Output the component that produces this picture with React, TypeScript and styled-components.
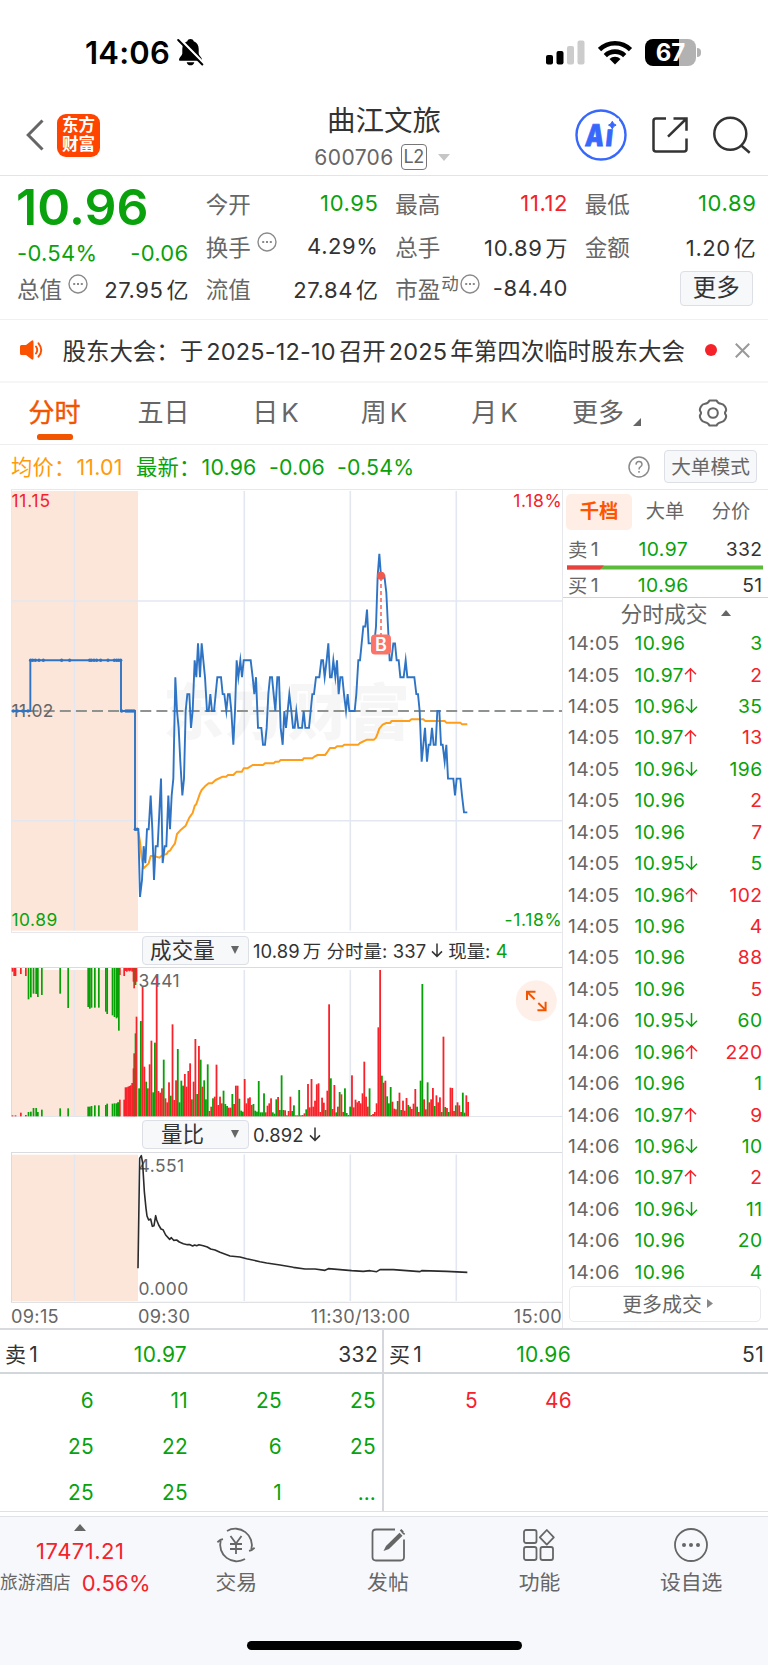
import React from 'react';
import styled, { createGlobalStyle, css } from 'styled-components';

const RED = '#f4222a';
const GREEN = '#09a20c';
const INK = '#333333';
const GREY = '#666666';
const LINE = '#e6e8ec';
const ORANGE = '#f25500';

type Tone = 'up' | 'down' | 'ink' | 'grey';
const tones: Record<Tone, string> = { up: RED, down: GREEN, ink: INK, grey: GREY };

const GlobalStyle = createGlobalStyle`
  * { box-sizing: border-box; }
  body {
    margin: 0;
    background: #fff;
    color: ${INK};
    font-family: Inter, "Noto Sans CJK SC", sans-serif;
    font-size: 22px;
    -webkit-font-smoothing: antialiased;
  }
`;

const Screen = styled.main`
  width: 768px;
  height: 1665px;
  overflow: hidden;
  display: flex;
  flex-direction: column;
  background: #fff;
  white-space: nowrap;
`;

/* ---------- status bar ---------- */

const StatusBar = styled.header`
  height: 104px;
  flex: none;
  display: flex;
  align-items: center;
  justify-content: space-between;
  padding: 0 67px 0 85px;
`;

const Clock = styled.div`
  display: flex;
  align-items: center;
  gap: 7px;
  color: #000;
  font-size: 31px;
  font-weight: 600;
  letter-spacing: 0.2px;
`;

const StatusIcons = styled.div`
  display: flex;
  align-items: center;
  gap: 12px;
  margin-left: -1px;
`;

const Battery = styled.div`
  display: flex;
  align-items: center;
  gap: 1px;
`;

const BatteryBody = styled.div`
  width: 51px;
  height: 27px;
  border-radius: 8px;
  background: linear-gradient(90deg, #000 67%, #b2b2b2 67%);
  color: #fff;
  font-size: 24px;
  font-weight: 700;
  line-height: 27px;
  text-align: center;
  letter-spacing: -0.1px;
`;

const BatteryTip = styled.div`
  width: 4px;
  height: 9px;
  border-radius: 0 4px 4px 0;
  background: #b2b2b2;
`;

/* ---------- title bar ---------- */

const TitleBar = styled.div`
  height: 72px;
  flex: none;
  display: grid;
  grid-template-columns: 1fr auto 1fr;
  border-bottom: 1px solid #e2e4e6;
`;

const TitleSide = styled.div<{ $end?: boolean }>`
  height: 62px;
  display: flex;
  align-items: center;
  justify-content: ${(p) => (p.$end ? 'flex-end' : 'flex-start')};
  gap: ${(p) => (p.$end ? '24px' : '13px')};
  padding: ${(p) => (p.$end ? '0 17px 0 0' : '0 0 0 26px')};
`;

const Brand = styled.div`
  width: 43px;
  height: 43px;
  border-radius: 9px;
  background: #ff4400;
  color: #fff;
  font-size: 16.5px;
  font-weight: 700;
  line-height: 18.5px;
  padding: 2.5px 0;
  text-align: center;
`;

const TitleCenter = styled.div`
  display: flex;
  flex-direction: column;
  align-items: center;
`;

const StockName = styled.h1`
  margin: -1px 0 4px;
  font-size: 28.5px;
  font-weight: 400;
  line-height: 36px;
`;

const StockCode = styled.div`
  display: flex;
  align-items: center;
  height: 28px;
  margin-right: 4px;
  color: ${GREY};
  font-size: 21px;
  letter-spacing: 0.4px;
`;

const LevelTag = styled.span`
  width: 26px;
  height: 26px;
  margin: 0 11px 0 7px;
  border: 1.5px solid #777;
  border-radius: 4px;
  font-size: 18px;
  line-height: 23px;
  text-align: center;
  letter-spacing: -0.3px;
`;

const Caret = styled.span<{ $w: number; $h: number; $color: string; $up?: boolean }>`
  width: 0;
  height: 0;
  border: solid transparent;
  border-width: ${(p) => (p.$up ? `0 ${p.$w / 2}px ${p.$h}px` : `${p.$h}px ${p.$w / 2}px 0`)};
  ${(p) => (p.$up ? css`border-bottom-color: ${p.$color};` : css`border-top-color: ${p.$color};`)}
`;

/* ---------- quote ---------- */

const Quote = styled.section`
  height: 144px;
  flex: none;
  display: grid;
  grid-template-columns: 171.5px 172.3px 172.3px 171.2px;
  grid-template-rows: 42.5px 42.5px 42px;
  column-gap: 17.2px;
  padding: 6px 0 0 17px;
  border-bottom: 1px solid #eef0f1;
`;

const Headline = styled.div`
  grid-row: span 2;
  color: ${GREEN};
`;

const LastPrice = styled.div`
  margin-left: -1px;
  font-size: 50px;
  font-weight: 600;
  line-height: 50px;
  letter-spacing: 0.1px;
`;

const Changes = styled.div`
  display: flex;
  justify-content: space-between;
  font-size: 22px;
  letter-spacing: 0.3px;
  line-height: 28px;
  margin-top: 7px;
`;

const Stat = styled.div`
  display: flex;
  align-items: center;
  justify-content: space-between;
`;

const StatLabel = styled.span`
  display: flex;
  align-items: center;
  color: ${GREY};
  font-size: 22.5px;

  svg { margin: -8px 0 0 6px; }
`;

const Sup = styled.span`
  font-size: 17.5px;
  margin: -12px -5px 0 1px;
`;

const StatValue = styled.span<{ $tone?: Tone }>`
  color: ${(p) => tones[p.$tone ?? 'ink']};
  font-size: 22px;
  letter-spacing: 0.6px;
  margin-right: -0.6px;
`;

const Unit = styled.span`
  margin-left: 3px;
`;

const MoreButton = styled.button`
  justify-self: end;
  align-self: center;
  width: 73px;
  height: 35px;
  margin-right: 3px;
  padding: 0;
  border: 1.5px solid #dcdfe5;
  border-radius: 4px;
  background: #f7f8fa;
  color: ${INK};
  font: inherit;
  font-size: 23.5px;
  line-height: 30px;
`;

/* ---------- announcement ---------- */

const Notice = styled.section`
  height: 63px;
  flex: none;
  display: flex;
  align-items: center;
  padding: 0 18px 1px 20px;
  border-bottom: 2px solid #f6f6f7;
`;

const NoticeText = styled.span`
  margin-left: 18.5px;
  width: 628px;
  font-size: 23.5px;
  letter-spacing: -0.05px;

  i { font-style: normal; margin: 0 3px; letter-spacing: 0.2px; }
`;

const Dot = styled.span`
  width: 12px;
  height: 12px;
  margin: 0 18px 0 auto;
  border-radius: 50%;
  background: #f6222a;
`;

/* ---------- period tabs ---------- */

const Tabs = styled.nav`
  height: 62px;
  flex: none;
  display: flex;
  align-items: stretch;
  border-bottom: 1px solid #eceeef;
`;

const Tab = styled.div<{ $w: number; $active?: boolean }>`
  width: ${(p) => p.$w}px;
  display: flex;
  flex-direction: column;
  align-items: center;
  padding-top: 11px;
  color: ${(p) => (p.$active ? ORANGE : GREY)};
  font-size: 26px;
  -webkit-text-stroke: ${(p) => (p.$active ? '0.4px' : '0')} currentColor;
  line-height: 38px;

  &::after {
    content: '';
    width: 36px;
    height: 6px;
    margin-top: 2px;
    border-radius: 2.5px;
    background: ${(p) => (p.$active ? ORANGE : 'transparent')};
  }
`;

const TabText = styled.span`
  display: flex;
  align-items: center;
  gap: 3px;
`;

const Legend = styled.div`
  height: 44px;
  flex: none;
  display: flex;
  align-items: center;
  padding: 0 11px 1px;
  font-size: 21.3px;
`;

const LegendItem = styled.span<{ $color: string; $gap: number }>`
  display: flex;
  align-items: baseline;
  margin-right: ${(p) => p.$gap}px;
  color: ${(p) => p.$color};
  line-height: 32px;
  letter-spacing: 0.2px;
`;

const LegendLabel = styled.span`
  width: 65.5px;
`;

const ModeButton = styled.button`
  width: 93px;
  height: 33px;
  margin-left: 14px;
  padding: 0;
  border: 1.5px solid #dcdfe5;
  border-radius: 4px;
  background: #f7f8fa;
  color: ${GREY};
  font: inherit;
  font-size: 19.7px;
  line-height: 28px;
`;

const Spacer = styled.span`
  flex: 1;
`;

/* ---------- charts and side panel ---------- */

const Market = styled.section`
  height: 841px;
  flex: none;
  display: flex;
  border-bottom: 2px solid #d8dade;
`;

const ChartColumn = styled.div`
  width: 563px;
  border-right: 1px solid ${LINE};
  display: flex;
  flex-direction: column;

  svg { display: block; flex: none; }
  svg text { font-family: Inter, "Noto Sans CJK SC", sans-serif; }
`;

const ChartToolbar = styled.div<{ $h: number }>`
  height: ${(p) => p.$h}px;
  flex: none;
  display: flex;
  align-items: center;
  padding-left: 142px;
  font-size: 18.4px;
  letter-spacing: 0.1px;
  gap: 5px;
`;

const Picker = styled.div`
  width: 107px;
  height: 29px;
  display: flex;
  align-items: center;
  justify-content: space-between;
  margin-right: -1px;
  padding: 0 9px 1px 6px;
  border: 1.5px solid #dcdfe5;
  border-radius: 4px;
  background: #f7f8fa;
  font-size: 21.5px;
  line-height: 26px;

  b {
    flex: 1;
    font-weight: 400;
    padding-right: 15px;
    text-align: center;
  }
`;

const TimeAxis = styled.div`
  height: 25px;
  display: grid;
  grid-template-columns: 127px 1fr 1fr 1fr;
  align-items: center;
  padding: 1px 0 0 11px;
  color: ${GREY};
  font-size: 18.2px;
  letter-spacing: 0.3px;

  span:nth-child(3) { text-align: center; padding-left: 21px; }
  span:nth-child(4) { text-align: right; }
`;

const Side = styled.aside`
  flex: 1;
  display: flex;
  flex-direction: column;
`;

const SideTabs = styled.div`
  height: 43px;
  display: flex;
  align-items: center;
  padding: 2px 0 0 3px;
  border-top: 1px solid ${LINE};
`;

const SideTab = styled.div<{ $active?: boolean }>`
  width: 66px;
  height: 36px;
  border-radius: 5px;
  background: ${(p) => (p.$active ? '#feeee5' : 'transparent')};
  color: ${(p) => (p.$active ? '#ff5500' : GREY)};
  font-size: 19.3px;
  font-weight: ${(p) => (p.$active ? 700 : 400)};
  line-height: 35px;
  text-align: center;
`;

const TradeRow = styled.div<{ $h: number; $drop?: number }>`
  height: ${(p) => p.$h}px;
  flex: none;
  display: grid;
  grid-template-columns: 66.5px 66.5px 1fr;
  align-items: center;
  padding: ${(p) => p.$drop ?? 0}px 5.5px 0 5px;
  font-size: 19.3px;
  letter-spacing: 0.4px;
`;

const TradeCell = styled.span<{ $tone: Tone; $end?: boolean }>`
  display: flex;
  align-items: center;
  justify-content: ${(p) => (p.$end ? 'flex-end' : 'flex-start')};
  color: ${(p) => tones[p.$tone]};
`;

const QuotePrice = styled.span`
  color: ${GREEN};
  text-align: center;
  padding-right: 9px;
`;

const SideTitle = styled.div`
  height: 29px;
  flex: none;
  display: flex;
  align-items: center;
  justify-content: center;
  gap: 13px;
  padding: 1px 0 0 20px;
  border-top: 1.5px solid #cfd3dc;
  color: ${GREY};
  font-size: 21.8px;
`;

const MoreTrades = styled.div`
  width: 192px;
  height: 36px;
  margin: 0 0 0 6px;
  display: flex;
  align-items: center;
  justify-content: center;
  gap: 5px;
  border: 1.5px solid #e9ebee;
  border-radius: 5px;
  color: ${GREY};
  font-size: 19.9px;
  padding-left: 5px;
`;

const Ratio = styled.svg`
  display: block;
  flex: none;
  margin-left: 4px;
`;

/* ---------- order queue ---------- */

const Queues = styled.section`
  height: 182px;
  flex: none;
  display: grid;
  grid-template-columns: 384px 384px;
  border-bottom: 1px solid #dfe2e5;
`;

const Queue = styled.div<{ $divider?: boolean }>`
  height: 181px;
  border-right: ${(p) => (p.$divider ? '2px solid #d5d7dd' : '0')};
`;

const QueueHead = styled.div`
  height: 44px;
  display: grid;
  grid-template-columns: 94px 88px 1fr;
  align-items: baseline;
  padding: 6.5px 4px 0 5px;
  border-bottom: 2px solid #d2d7dc;
  font-size: 21px;
  line-height: 35px;
  letter-spacing: 0.3px;

  span:nth-child(2), span:nth-child(3) { text-align: right; }
`;

const QueueGrid = styled.div`
  height: 137px;
  display: grid;
  grid-template-columns: 94px 94px 94px 94px;
  grid-auto-rows: 46.2px;
  align-items: center;
  padding-top: 3px;
  font-size: 20.8px;
  letter-spacing: 0.3px;
  text-align: right;
`;

const TradeValue = styled.span<{ $tone?: Tone }>`
  color: ${(p) => tones[p.$tone ?? 'down']};
`;

/* ---------- bottom bar ---------- */

const BottomBar = styled.footer`
  flex: 1;
  margin-top: 4px;
  border-top: 1.5px solid #e0e3e6;
  background: #f7f8fb;
  display: flex;
  flex-direction: column;
`;

const BottomNav = styled.div`
  height: 124px;
  display: grid;
  grid-template-columns: 160.5px repeat(4, 151.6px);
`;

const IndexBox = styled.div`
  display: flex;
  flex-direction: column;
  align-items: center;
  padding-top: 7px;
  color: ${RED};
  font-size: 22px;
`;

const IndexValue = styled.div`
  line-height: 30px;
  margin-top: 5px;
  letter-spacing: 0.5px;
`;

const IndexRow = styled.div`
  width: 160.5px;
  display: flex;
  align-items: center;
  gap: 11px;
  line-height: 34px;
  letter-spacing: 0.2px;
`;

const IndexName = styled.span`
  color: ${GREY};
  font-size: 17.7px;
  letter-spacing: 0;
`;

const NavItem = styled.div`
  display: flex;
  flex-direction: column;
  align-items: center;
  padding-top: 8px;
  color: ${GREY};
  font-size: 20.8px;
  line-height: 34px;

  svg { display: block; margin-bottom: 1px; }
`;

const HomeBar = styled.div`
  width: 275px;
  height: 9px;
  margin: 0 auto;
  border-radius: 5px;
  background: #000;
`;

/* ---------- data ---------- */

/* Chart samples are kept on a grid of three units per pixel. */
const U = 3;

/* [x, cents above the previous close] */
const priceSamples: [number, number][] = [
  [36, 0], [91, 0], [91, 3], [363, 3], [363, 0], [405, 0], [405, -7], [415, -7], [420, -11], [426, -10], [431, -8], [436, -9],
  [441, -7], [446, -7], [452, -5], [457, -7], [462, -10], [467, -8], [473, -8], [478, -6], [483, -4], [488, -9], [494, -8],
  [499, -8], [505, -5], [510, -7], [515, -5], [520, -4], [526, 2], [531, 0], [536, -1], [541, -3], [547, -5], [552, -4],
  [557, 0], [562, 1], [568, 1], [573, -1], [578, 0], [584, 3], [589, 2], [594, 4], [600, 2], [605, 4], [610, 3], [615, 2],
  [621, 0], [626, 0], [631, 1], [636, 0], [642, 0], [647, 1], [652, 2], [663, 2], [668, 1], [673, 1], [679, 0], [684, 1],
  [689, 1], [694, 0], [700, -2], [705, 0], [710, 3], [715, 2], [721, 3], [726, 2], [731, 3], [752, 3], [758, 2], [763, 1],
  [768, 2], [774, -1], [784, -1], [789, -2], [795, -2], [800, -1], [805, 1], [810, 2], [816, 2], [821, 1], [826, 0],
  [832, 2], [837, 2], [842, -1], [848, -2], [853, 0], [858, -1], [863, 0], [868, 1], [874, 0], [879, -1], [884, -1],
  [889, 0], [895, -1], [906, -1], [911, 0], [916, -1], [927, -1], [932, 0], [937, 1], [942, 1], [948, 2], [958, 2],
  [964, 3], [969, 3], [974, 2], [980, 3], [985, 4], [990, 2], [995, 2], [1000, 3], [1006, 2], [1011, 3], [1016, 1],
  [1021, 2], [1027, 2], [1032, 1], [1038, 0], [1043, 1], [1048, 0], [1064, 0], [1069, 1], [1075, 3], [1080, 3], [1085, 4],
  [1090, 5], [1096, 5], [1101, 6], [1106, 4], [1123, 4], [1128, 5], [1133, 8], [1138, 9.3], [1143, 8], [1153, 8], [1159, 7],
  [1164, 5], [1169, 3], [1174, 3], [1180, 4], [1185, 4], [1190, 3], [1196, 3], [1201, 2], [1211, 2], [1217, 3], [1222, 2],
  [1243, 2], [1249, 1], [1254, 1], [1259, 0], [1265, -3], [1270, -2], [1275, -1], [1281, -3], [1286, -2], [1291, -2],
  [1296, -1], [1301, -2], [1307, -2], [1312, 0], [1318, 0], [1323, -2], [1328, -2], [1334, -3], [1339, -2], [1344, -4],
  [1360, -4], [1365, -5], [1370, -4], [1381, -4], [1386, -5], [1392, -6], [1402, -6],
];

const averageSamples: [number, number][] = [
  [415, 1040], [420, 1070], [425, 1120], [431, 1150], [446, 1135], [452, 1113], [462, 1113], [478, 1118], [488, 1110],
  [500, 1107], [505, 1099], [510, 1097], [515, 1089], [525, 1075], [531, 1047], [541, 1036], [557, 1022], [568, 998],
  [578, 984], [584, 963], [589, 957], [600, 925], [605, 915], [615, 904], [626, 895], [636, 895], [647, 885], [668, 875],
  [678, 875], [684, 870], [700, 870], [710, 860], [726, 860], [731, 850], [742, 850], [758, 840], [789, 840], [795, 835],
  [821, 835], [826, 830], [837, 830], [842, 825], [908, 825], [911, 820], [937, 820], [943, 815], [953, 810], [975, 810],
  [980, 804], [990, 789], [1005, 789], [1011, 784], [1027, 784], [1033, 779], [1075, 779], [1080, 774], [1101, 764],
  [1122, 764], [1128, 758], [1133, 745], [1138, 731], [1148, 719], [1159, 714], [1170, 714], [1175, 708], [1228, 708],
  [1234, 703], [1270, 703], [1276, 708], [1334, 708], [1339, 713], [1381, 713], [1386, 718], [1402, 718],
];

const ratioSamples: [number, number][] = [
  [414, 1030], [419, 700], [424, 692], [428, 715], [430, 750], [433, 800], [438, 850], [441, 873], [446, 885], [452, 882],
  [457, 904], [462, 902], [467, 872], [470, 885], [476, 900], [483, 912], [489, 914], [497, 930], [509, 943], [514, 938],
  [521, 946], [530, 945], [538, 951], [550, 956], [562, 959], [570, 959], [578, 963], [584, 960], [590, 962], [597, 959],
  [610, 962], [622, 966], [632, 972], [645, 975], [660, 982], [690, 993], [720, 996], [740, 1001], [780, 1010],
  [800, 1014], [840, 1020], [880, 1027], [915, 1032], [945, 1032], [975, 1036], [985, 1031], [1020, 1034], [1055, 1037],
  [1090, 1039], [1110, 1037], [1130, 1040], [1140, 1034], [1180, 1034], [1220, 1037], [1260, 1040], [1265, 1037],
  [1340, 1039], [1402, 1042],
];

/* One bar a minute: direction and top edge. */
const volumeBars = `g490 g288 r185 r425 g470 r490 r418 r347 g502 g353 r150 r498 r503 r490 g404 r520 r532 r472 g512 r298 r525
r466 g372 g532 g467 g482 r447 r485 r438 r415 g523 r470 r342 g507 r363 g404 r485 g466 g523 g418 r558 r545 g520 r515 r419 r540
r515 r535 g497 g537 g543 r548 r548 g507 r537 r482 r482 g521 g557 g560 r462 r535 r520 r517 r540 g537 g557 g560 g468 g562 g562
g505 r562 r542 r535 r520 g562 g566 g523 r516 g555 g451 g555 r556 g571 r558 r515 g558 g541 r571 r571 g495 g571 r570 r565 g553
r477 r547 r462 r545 r527 r478 r475 r561 r518 r533 g555 r497 r238 g460 r552 r480 g562 r545 g501 r508 r561 g490 g564 g570 g545
r451 r547 r524 r532 r528 r535 r505 r410 r515 r545 g490 r570 r567 r561 r535 r307 r135 g452 r473 r467 g514 g535 g486 r530 r551
r553 g528 r503 g555 r527 r557 r519 g540 r545 r552 r536 r492 g545 r561 g467 g177 r523 r553 g472 r532 r523 r489 g543 r511 r532
r517 g561 r335 g546 r549 g561 r488 r489 r558 g541 r532 r541 r561 g503 g563 r511 r531`.split(/\s+/);

/* Call auction: [x, top-bar bottom, bottom-bar top, direction] */
const auctionBars: [number, number, number, 'r' | 'g'][] = [
  [37, 140, 571, 'r'], [42, 153, 574, 'r'], [46, 153, 571, 'r'], [62, 147, 563, 'r'], [77, 153, 570, 'r'],
  [85, 223, 561, 'g'], [92, 217, 560, 'g'], [100, 206, 549, 'g'], [108, 207, 549, 'g'], [113, 216, 561, 'g'],
  [125, 210, 554, 'g'], [180, 206, 550, 'g'], [204, 249, 550, 'g'], [264, 246, 545, 'g'], [269, 251, 545, 'g'],
  [274, 248, 543, 'g'], [284, 248, 541, 'g'], [296, 248, 541, 'g'], [317, 260, 540, 'g'], [321, 267, 536, 'g'],
  [337, 271, 536, 'g'], [343, 276, 535, 'g'], [349, 280, 535, 'g'], [353, 277, 532, 'g'], [356, 317, 532, 'g'],
  [359, 150, 524, 'r'], [372, 153, 524, 'r'], [376, 138, 487, 'r'], [380, 140, 487, 'r'], [384, 137, 485, 'r'],
  [388, 139, 483, 'r'], [392, 137, 481, 'r'], [396, 140, 474, 'r'], [400, 170, 430, 'r'], [402, 190, 385, 'r'],
  [406, 180, 325, 'g'], [409, 170, 275, 'r'],
];

const auctionDots = [40, 52, 68, 84, 92, 98, 106, 117, 130, 185, 209, 269, 274, 282, 290, 302, 324, 343, 350, 356, 362, 365, 378, 384, 390, 396, 402, 406, 412];

type Trade = [string, string, '' | '↑' | '↓', number, Tone];
const trades: Trade[] = [
  ['14:05', '10.96', '', 3, 'down'],
  ['14:05', '10.97', '↑', 2, 'up'],
  ['14:05', '10.96', '↓', 35, 'down'],
  ['14:05', '10.97', '↑', 13, 'up'],
  ['14:05', '10.96', '↓', 196, 'down'],
  ['14:05', '10.96', '', 2, 'up'],
  ['14:05', '10.96', '', 7, 'up'],
  ['14:05', '10.95', '↓', 5, 'down'],
  ['14:05', '10.96', '↑', 102, 'up'],
  ['14:05', '10.96', '', 4, 'up'],
  ['14:05', '10.96', '', 88, 'up'],
  ['14:05', '10.96', '', 5, 'up'],
  ['14:06', '10.95', '↓', 60, 'down'],
  ['14:06', '10.96', '↑', 220, 'up'],
  ['14:06', '10.96', '', 1, 'down'],
  ['14:06', '10.97', '↑', 9, 'up'],
  ['14:06', '10.96', '↓', 10, 'down'],
  ['14:06', '10.97', '↑', 2, 'up'],
  ['14:06', '10.96', '↓', 11, 'down'],
  ['14:06', '10.96', '', 20, 'down'],
  ['14:06', '10.96', '', 4, 'down'],
];

const sellQueue = ['6', '11', '25', '25', '25', '22', '6', '25', '25', '25', '1', '…'];
const buyQueue = ['5', '46'];

/* ---------- drawings ---------- */

const MORE_DOTS = (
  <svg width="20" height="20" viewBox="0 0 20 20" fill="none" stroke="#8a8a8a">
    <circle cx="10" cy="10" r="9" strokeWidth="1.4" />
    <path d="M5.2 10h2M9 10h2M12.8 10h2" strokeWidth="2" />
  </svg>
);

const Arrow = ({ dir }: { dir: '↑' | '↓' }) => (
  <svg width="13" height="16" viewBox="0 0 13 16" fill="none" stroke={dir === '↑' ? RED : GREEN} strokeWidth="1.5">
    <path d={dir === '↑' ? 'M6.5 15V2M1 7.2 6.5 1.8 12 7.2' : 'M6.5 1v13M1 8.8l5.5 5.4L12 8.8'} />
  </svg>
);

const DownArrow = () => (
  <svg width="12" height="15" viewBox="0 0 12 15" fill="none" stroke={INK} strokeWidth="1.5">
    <path d="M6 0.5v13M1 8.4l5 5 5-5" />
  </svg>
);

const GRID_X = [244.3, 350.3, 456.3];

const PriceChart = () => {
  const line = priceSamples.map(([x, c]) => `${x / U},${711 - c * 16.9}`).join(' ');
  const avg = averageSamples.map(([x, y]) => `${x / U},${485 + y / U}`).join(' ');
  return (
    <svg width="562" height="444" viewBox="0 489 562 444">
      <rect x="11.5" y="491" width="126.5" height="439.7" fill="#fce6da" />
      <path d="M11 489.5H562M11.5 489V933M11 932.5H562" stroke={LINE} fill="none" />
      <path d={`M12 601H562M12 820.7H562M74.5 491V930.5${GRID_X.map((x) => `M${x} 491V930.5`).join('')}`} stroke="#e3e7ef" strokeWidth="1.6" fill="none" />
      <text x="163" y="735" fontSize="61" letterSpacing="1" fontWeight="900" fill="#000" fillOpacity="0.035">东方财富</text>
      <path d="M11.5 711H562" stroke="#8f9390" strokeWidth="1.8" strokeDasharray="11 5.1" />
      <text x="11.5" y="716.8" fontSize="17.4" letterSpacing="0.4" fill={GREY}>11.02</text>
      <polyline points={avg} fill="none" stroke="#ff9e1a" strokeWidth="2" strokeLinejoin="round" />
      <polyline points={line} fill="none" stroke="#2f74c4" strokeWidth="1.9" strokeMiterlimit="10" />
      {auctionDots.map((x) => (
        <circle key={x} cx={x / U} cy={x < 91 || x > 364 ? (x > 405 ? 829.3 : 711) : 660.3} r="1.7" fill="#2f74c4" />
      ))}
      <path d="M381 577v58" stroke="#f96b62" strokeWidth="1.6" strokeDasharray="4 3" />
      <circle cx="381" cy="575.7" r="4" fill="#f0594e" />
      <rect x="371" y="634.5" width="20" height="20" rx="4" fill="#fb7468" />
      <text x="381" y="651" fontSize="18" fontWeight="600" fill="#fff" textAnchor="middle">B</text>
      <text x="11.5" y="507" fontSize="17.4" fill={RED} letterSpacing="0.8">11.15</text>
      <text x="11.5" y="926" fontSize="17.4" fill={GREEN} letterSpacing="0.5">10.89</text>
      <text x="562.5" y="507" fontSize="17.5" fill={RED} textAnchor="end" letterSpacing="0.7">1.18%</text>
      <text x="562.5" y="926" fontSize="17.5" fill={GREEN} textAnchor="end" letterSpacing="0.7">-1.18%</text>
    </svg>
  );
};

const VolumeChart = () => {
  const fill = (c: string) => (c === 'r' ? '#f8222a' : '#07a007');
  const at = (y: number) => 925 + y / U;
  return (
    <svg width="562" height="150" viewBox="0 967 562 150">
      <rect x="11.5" y="970" width="126.5" height="146" fill="#fce6da" />
      <path d={`M74.5 970V1116${GRID_X.map((x) => `M${x} 970V1116`).join('')}`} stroke="#e3e7ef" strokeWidth="1.6" />
      <path d="M11 967.5H562M11.5 967V1117" stroke="#d9dbe0" fill="none" />
      <path d="M11 1116.5H562" stroke="#e3e5ec" />
      {auctionBars.map(([x, b, t, c]) => (
        <g key={x} fill={fill(c)}>
          <rect x={(x - 2) / U} y={at(129)} width="1.7" height={(b - 129) / U} />
          <rect x={(x - 2) / U} y={at(t)} width="1.7" height={(574 - t) / U} />
        </g>
      ))}
      {volumeBars.map((bar, i) => {
        const top = Number(bar.slice(1));
        return <rect key={i} x={(414.6 + i * 5.278) / U} y={at(top)} width="1.8" height={(574 - top) / U} fill={fill(bar[0])} />;
      })}
      <text x="138.5" y="987" fontSize="17.4" letterSpacing="0.4" fill={GREY}>3441</text>
      <circle cx="536.3" cy="1000.7" r="20.5" fill="#fef0e9" />
      <path d="M527 1000V991.8H535.5M527.5 992.3 534.6 999.2M545.6 1001.8V1010.2H537.4M545.2 1009.6 538.3 1003" stroke={ORANGE} strokeWidth="2" fill="none" />
    </svg>
  );
};

const RatioChart = () => (
  <svg width="562" height="151" viewBox="0 1152 562 151">
    <rect x="11.5" y="1154.7" width="126.5" height="146.3" fill="#fce6da" />
    <path d={`M74.5 1154.5V1301${GRID_X.map((x) => `M${x} 1154.5V1301`).join('')}`} stroke="#e3e7ef" strokeWidth="1.6" />
    <path d="M11 1152.5H562M11.5 1152V1302M11 1302.3H562" stroke="#d9dbe0" fill="none" />
    <text x="138.5" y="1172" fontSize="17.4" letterSpacing="0.5" fill={GREY}>4.551</text>
    <text x="138.5" y="1295.3" fontSize="17.4" letterSpacing="0.4" fill={GREY}>0.000</text>
    <polyline points={ratioSamples.map(([x, y]) => `${x / U},${925 + y / U}`).join(' ')} fill="none" stroke="#2b2b2b" strokeWidth="1.6" strokeLinejoin="round" />
  </svg>
);

/* ---------- page ---------- */

export default function App() {
  return (
    <>
      <GlobalStyle />
      <Screen>
        <StatusBar>
          <Clock>
            14:06
            <svg width="27" height="28" viewBox="0 0 27 28">
              <path d="M13.5 1c-1.6 0-2.8.9-3.2 2.3C6.9 4.5 5.3 7.5 5.3 11v4.5c0 2.2-3.3 4-3.3 6.2 0 .7.5 1.1 1.3 1.1h20.4c.8 0 1.3-.4 1.3-1.1 0-2.2-3.3-4-3.3-6.2V11c0-3.5-1.6-6.5-5-7.7C16.3 1.9 15.1 1 13.5 1ZM9.7 24.2c.3 1.9 1.8 3.1 3.8 3.1s3.5-1.2 3.8-3.1Z" fill="#000" />
              <path d="M3.2 1.5 26.5 25" stroke="#fff" strokeWidth="2.6" />
              <path d="M1.2 2 25.3 26.5" stroke="#000" strokeWidth="2" strokeLinecap="round" />
            </svg>
          </Clock>
          <StatusIcons>
            <svg width="40" height="25" viewBox="0 0 40 25">
              <rect x="0" y="15" width="7" height="9.5" rx="2" fill="#000" />
              <rect x="10.5" y="11" width="7" height="13.5" rx="2" fill="#000" />
              <rect x="21" y="6" width="7" height="18.5" rx="2" fill="#ccc" />
              <rect x="31.5" y="0.5" width="7" height="24" rx="2" fill="#ccc" />
            </svg>
            <svg width="35" height="25" viewBox="0.500 0 35 25" fill="none" stroke="#000" strokeWidth="4.6">
              <path d="M2 9.6a22 22 0 0 1 31 0" />
              <path d="M7.8 15.6a13.8 13.8 0 0 1 19.4 0" />
              <path d="M17.5 24.5 12 19a7.7 7.7 0 0 1 11 0Z" fill="#000" stroke="none" />
            </svg>
            <Battery>
              <BatteryBody>67</BatteryBody>
              <BatteryTip />
            </Battery>
          </StatusIcons>
        </StatusBar>

        <TitleBar>
          <TitleSide>
            <svg width="18" height="32" viewBox="0 0 18 32" fill="none" stroke="#666" strokeWidth="3">
              <path d="M16.5 1.5 2.2 16l14.3 14.5" />
            </svg>
            <Brand>东方<br />财富</Brand>
          </TitleSide>
          <TitleCenter>
            <StockName>曲江文旅</StockName>
            <StockCode>
              600706
              <LevelTag>L2</LevelTag>
              <Caret $w={12} $h={7} $color="#c6c6c6" />
            </StockCode>
          </TitleCenter>
          <TitleSide $end>
            <svg width="52" height="52" viewBox="0 0 52 52">
              <circle cx="26" cy="26" r="24.5" fill="none" stroke="#3767fb" strokeWidth="2.4" />
              <text transform="translate(9.5 36.5) skewX(-6) scale(.78 1)" fontSize="30" fontWeight="900" fill="#3767fb" stroke="#3767fb" strokeWidth="0.8" letterSpacing="2.5">Ai</text>
              <path d="M31 9.5h13v10.5H31Z" fill="#fff" />
              <path d="M37.3 12.3q1 3 3.8 3.8-2.8.8-3.8 3.8-1-3-3.8-3.8 2.8-.8 3.8-3.8Z" fill="#3767fb" stroke="#3767fb" />
            </svg>
            <svg width="38" height="38" viewBox="0 0 38 38" fill="none" stroke="#333" strokeWidth="2.5">
              <path d="M15 2.5H5q-2.5 0-2.5 2.5V33q0 2.5 2.5 2.5H33q2.5 0 2.5-2.5V22.5M22.5 2.5H35.5V14.7M35 3 17 20.7" />
            </svg>
            <svg width="38" height="38" viewBox="0 0 38 38" fill="none" stroke="#333" strokeWidth="2.5">
              <circle cx="17.3" cy="17.8" r="16" />
              <path d="M28 29.3 36.7 36.8" />
            </svg>
          </TitleSide>
        </TitleBar>

        <Quote>
          <Headline>
            <LastPrice>10.96</LastPrice>
            <Changes>
              <span>-0.54%</span>
              <span>-0.06</span>
            </Changes>
          </Headline>
          <Stat><StatLabel>今开</StatLabel><StatValue $tone="down">10.95</StatValue></Stat>
          <Stat><StatLabel>最高</StatLabel><StatValue $tone="up">11.12</StatValue></Stat>
          <Stat><StatLabel>最低</StatLabel><StatValue $tone="down">10.89</StatValue></Stat>
          <Stat><StatLabel>换手{MORE_DOTS}</StatLabel><StatValue>4.29%</StatValue></Stat>
          <Stat><StatLabel>总手</StatLabel><StatValue>10.89<Unit>万</Unit></StatValue></Stat>
          <Stat><StatLabel>金额</StatLabel><StatValue>1.20<Unit>亿</Unit></StatValue></Stat>
          <Stat><StatLabel>总值{MORE_DOTS}</StatLabel><StatValue>27.95<Unit>亿</Unit></StatValue></Stat>
          <Stat><StatLabel>流值</StatLabel><StatValue>27.84<Unit>亿</Unit></StatValue></Stat>
          <Stat><StatLabel>市盈<Sup>动</Sup>{MORE_DOTS}</StatLabel><StatValue>-84.40</StatValue></Stat>
          <MoreButton>更多</MoreButton>
        </Quote>

        <Notice>
          <svg width="24" height="20" viewBox="0 0 24 20">
            <path d="M0 6.5q0-1.5 1.5-1.5H6l5.5-4.3Q13.5-.4 13.5 2v16q0 2.4-2 1.3L6 15H1.5Q0 15 0 13.5Z" fill="#fb5200" />
            <path d="M16 6.5q2.5 3.5 0 7M18.5 3.3q5.5 6.7 0 13.4" fill="none" stroke="#fb5200" strokeWidth="1.9" strokeLinecap="round" />
          </svg>
          <NoticeText>股东大会：于<i>2025-12-10</i>召开<i>2025</i>年第四次临时股东大会</NoticeText>
          <Dot />
          <svg width="15" height="15" viewBox="0 0 15 15" stroke="#999" strokeWidth="2">
            <path d="M.8.8l13.4 13.4M14.2.8.8 14.2" />
          </svg>
        </Notice>

        <Tabs>
          <Tab $w={109} $active><TabText>分时</TabText></Tab>
          <Tab $w={109}><TabText>五日</TabText></Tab>
          <Tab $w={115}><TabText>日<span>K</span></TabText></Tab>
          <Tab $w={102}><TabText>周<span>K</span></TabText></Tab>
          <Tab $w={119}><TabText>月<span>K</span></TabText></Tab>
          <Tab $w={105}>
            <TabText>
              更多
              <svg width="14" height="26" viewBox="0 0 14 26"><path d="M6 26h8v-8Z" fill="#666" /></svg>
            </TabText>
          </Tab>
          <Tab $w={108}>
            <TabText>
              <svg width="30" height="38" viewBox="0 0 30 34" fill="none" stroke="#666" strokeWidth="2.1">
                <path d="M11.5 4.5h7q1.5 3 4.5 3.3 2.5.2 4 2.7 2 3.5.5 5-1 1.5 0 3 1.5 1.5-.5 5-1.5 2.5-4 2.7-3 .3-4.5 3.3h-7q-1.5-3-4.5-3.3-2.5-.2-4-2.7-2-3.5-.5-5 1-1.5 0-3-1.5-1.5.5-5 1.5-2.5 4-2.7 3-.3 4.5-3.3Z" strokeLinejoin="round" />
                <circle cx="15" cy="17" r="4.8" />
              </svg>
            </TabText>
          </Tab>
        </Tabs>

        <Legend>
          <LegendItem $color="#ff9a0a" $gap={13.5}><LegendLabel>均价：</LegendLabel>11.01</LegendItem>
          <LegendItem $color={GREEN} $gap={12.5}><LegendLabel>最新：</LegendLabel>10.96</LegendItem>
          <LegendItem $color={GREEN} $gap={12}>-0.06</LegendItem>
          <LegendItem $color={GREEN} $gap={0}>-0.54%</LegendItem>
          <Spacer />
          <svg width="22" height="22" viewBox="0 0 22 22" fill="none" stroke="#8a8a8a" strokeWidth="1.5">
            <circle cx="11" cy="11" r="10" />
            <path d="M8 8.6q.2-3 3-3t3 2.7q0 1.5-1.6 2.5Q11 11.6 11 13.5M11 15v1.8" />
          </svg>
          <ModeButton>大单模式</ModeButton>
        </Legend>

        <Market>
          <ChartColumn>
            <PriceChart />
            <ChartToolbar $h={34}>
              <Picker><b>成交量</b><Caret $w={9} $h={8} $color="#666" /></Picker>
              <span>10.89<Unit>万</Unit> 分时量: 337</span>
              <DownArrow />
              <span>现量: <TradeValue>4</TradeValue></span>
            </ChartToolbar>
            <VolumeChart />
            <ChartToolbar $h={35}>
              <Picker><b>量比</b><Caret $w={9} $h={8} $color="#666" /></Picker>
              <span>0.892</span>
              <DownArrow />
            </ChartToolbar>
            <RatioChart />
            <TimeAxis>
              <span>09:15</span>
              <span>09:30</span>
              <span>11:30/13:00</span>
              <span>15:00</span>
            </TimeAxis>
          </ChartColumn>

          <Side>
            <SideTabs>
              <SideTab $active>千档</SideTab>
              <SideTab>大单</SideTab>
              <SideTab>分价</SideTab>
            </SideTabs>
            <TradeRow $h={33}>
              <TradeCell $tone="grey">卖<Unit>1</Unit></TradeCell>
              <QuotePrice>10.97</QuotePrice>
              <TradeCell $tone="ink" $end>332</TradeCell>
            </TradeRow>
            <Ratio width="196" height="5" viewBox="0 0 196 5">
              <rect y="0.5" width="196" height="4" fill="#5dbb3c" />
              <path d="M0 .5h37l-4 4H0Z" fill="#e8423f" />
            </Ratio>
            <TradeRow $h={27} $drop={1}>
              <TradeCell $tone="grey">买<Unit>1</Unit></TradeCell>
              <QuotePrice>10.96</QuotePrice>
              <TradeCell $tone="ink" $end>51</TradeCell>
            </TradeRow>
            <SideTitle>分时成交<Caret $w={10} $h={6} $color="#666" $up /></SideTitle>
            {trades.map(([time, price, dir, size, tone], i) => (
              <TradeRow key={i} $h={31.43} $drop={3}>
                <TradeCell $tone="grey">{time}</TradeCell>
                <TradeCell $tone="down">{price}{dir && <Arrow dir={dir} />}</TradeCell>
                <TradeCell $tone={tone} $end>{size}</TradeCell>
              </TradeRow>
            ))}
            <MoreTrades>
              更多成交
              <svg width="6" height="9" viewBox="0 0 6 9"><path d="M0 0l6 4.5-6 4.5Z" fill="#888" /></svg>
            </MoreTrades>
          </Side>
        </Market>

        <Queues>
          <Queue $divider>
            <QueueHead>
              <span>卖<Unit>1</Unit></span>
              <TradeValue>10.97</TradeValue>
              <span>332</span>
            </QueueHead>
            <QueueGrid>
              {sellQueue.map((n, i) => <TradeValue key={i}>{n}</TradeValue>)}
            </QueueGrid>
          </Queue>
          <Queue>
            <QueueHead>
              <span>买<Unit>1</Unit></span>
              <TradeValue>10.96</TradeValue>
              <span>51</span>
            </QueueHead>
            <QueueGrid>
              {buyQueue.map((n, i) => <TradeValue key={i} $tone="up">{n}</TradeValue>)}
            </QueueGrid>
          </Queue>
        </Queues>

        <BottomBar>
          <BottomNav>
            <IndexBox>
              <Caret $w={12} $h={7} $color="#666" $up />
              <IndexValue>17471.21</IndexValue>
              <IndexRow><IndexName>旅游酒店</IndexName>0.56%</IndexRow>
            </IndexBox>
            <NavItem>
              <svg width="40" height="40" viewBox="0 0 40 40" fill="none" stroke="#666" strokeWidth="1.8">
                <path d="M11 6a16.5 16.5 0 0 1 24.3 18.5M33 25.8l2.6-.6 3-2.4" />
                <path d="M29 34A16.5 16.5 0 0 1 4.7 15.5M7 14.2l-2.6.6-3 2.4" />
                <path d="M14.5 11l5.5 7.5 5.5-7.5M20 18.5V29M14 19h12M14 24h12" />
              </svg>
              交易
            </NavItem>
            <NavItem>
              <svg width="40" height="40" viewBox="0 0 40 40" fill="none" stroke="#666" strokeWidth="1.8">
                <path d="M27 4.5H8q-3.5 0-3.5 3.5V32q0 3.5 3.5 3.5H32.5q3.5 0 3.5-3.5V14.5" />
                <path d="M31.5 7.8 34.5 10.8 21 24 15.5 26 18 21Z" fill="#666" stroke="none" />
                <path d="M33 6.8 34.6 5.2M34.8 8.8l1-1.2" strokeWidth="3.5" />
              </svg>
              发帖
            </NavItem>
            <NavItem>
              <svg width="40" height="40" viewBox="0 0 40 40" fill="none" stroke="#666" strokeWidth="1.8">
                <rect x="5" y="5" width="12.5" height="13" rx="2" />
                <rect x="5" y="22" width="12.5" height="13" rx="2" />
                <rect x="21.5" y="22" width="12.5" height="13" rx="2" />
                <path d="M27.8 5l7 7.3-7 7.3-7-7.3Z" strokeLinejoin="round" />
              </svg>
              功能
            </NavItem>
            <NavItem>
              <svg width="40" height="40" viewBox="0 0 40 40" fill="none" stroke="#666" strokeWidth="1.8">
                <circle cx="20" cy="20" r="16" />
                <g fill="#666" stroke="none">
                  <circle cx="13" cy="20" r="2" />
                  <circle cx="20" cy="20" r="2" />
                  <circle cx="27" cy="20" r="2" />
                </g>
              </svg>
              设自选
            </NavItem>
          </BottomNav>
          <HomeBar />
        </BottomBar>
      </Screen>
    </>
  );
}
